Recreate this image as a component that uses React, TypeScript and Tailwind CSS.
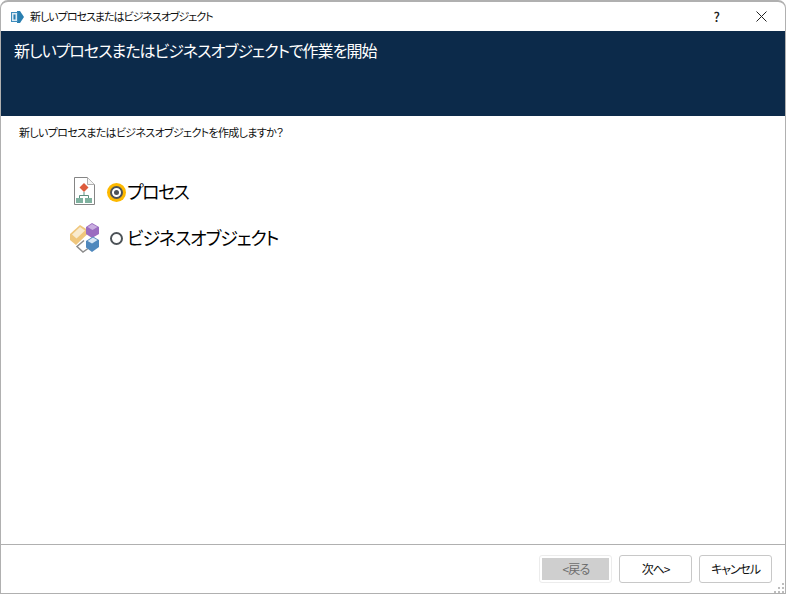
import { useState } from 'react'

const font = "font-['Noto_Sans_CJK_JP','Liberation_Sans',sans-serif] [font-feature-settings:'palt']"

function AppIcon() {
  return (
    <svg width="16" height="16" viewBox="0 0 16 16">
      <path d="M8 2h3l4 6-4 6H8z" fill="#2a7fb0" />
      <rect x="2.5" y="3.5" width="6" height="9" fill="#dbe9f3" stroke="#3f8dbd" />
      <rect x="4.5" y="5.5" width="2" height="5" fill="#2a7fb0" />
    </svg>
  )
}

function ProcessIcon() {
  return (
    <svg width="24" height="30" viewBox="0 0 24 30">
      <path d="M1.5 1.5h13l7 7v20h-20z" fill="#fff" stroke="#858585" />
      <path d="M14.5 1.5v7h7" fill="#f4f4f4" stroke="#b0b0b0" />
      <path d="M11 7l4.500 4.500L11 16l-4.500-4.500z" fill="#dd5b3c" />
      <path d="M11 16v3.500M6.500 22v-2.500h9V22" fill="none" stroke="#5d8f80" />
      <rect x="3" y="22" width="7" height="5" fill="#7fb19f" />
      <rect x="12" y="22" width="7" height="5" fill="#7fb19f" />
    </svg>
  )
}

function ObjectIcon() {
  return (
    <svg width="31" height="31" viewBox="0 0 31 31">
      <path d="M1 12l10-9 7 4.500v5L7 23 1 18z" fill="#efc67c" />
      <path d="M3 12.500L11 5l5 3.500L7.500 16.500z" fill="#f9ebcf" />
      <path d="M15 18.500L8 24.500l6 5.500 5-3.500" fill="none" stroke="#8c8c8c" strokeWidth="1.500" />
      <path d="M17 5l6-4 7 4v7l-7 4-6-4z" fill="#9a6cc0" />
      <path d="M18.500 5L23 2l5.500 3-5 3z" fill="#c9aee0" />
      <path d="M17 19l7-4.500 6 3.500v7l-7 5-6-4.500z" fill="#4f88bd" />
      <path d="M18.500 19l5.500-3.500 4.500 2.500-5.500 3.500z" fill="#d6e6f4" />
    </svg>
  )
}

function Radio({ checked }: { checked: boolean }) {
  if (checked) {
    return (
      <span className="mt-[2px] flex h-[19px] w-[19px] items-center justify-center rounded-full bg-[#fdb900]">
        <span className="flex h-[13px] w-[13px] items-center justify-center rounded-full border-2 border-[#4d5358] bg-white">
          <span className="h-[5px] w-[5px] rounded-full bg-[#4d5358]" />
        </span>
      </span>
    )
  }
  return (
    <span className="mt-[2px] flex h-[19px] w-[19px] items-center justify-center">
      <span className="h-[13px] w-[13px] rounded-full border-2 border-[#4d5358] bg-white" />
    </span>
  )
}

function FooterButton({ label, disabled }: { label: string; disabled?: boolean }) {
  if (disabled) {
    return (
      <button className="h-[28px] w-[73px] rounded-[3px] border border-[#ececec] bg-white p-[2px]">
        <span className="flex h-full w-full items-center justify-center bg-[#cfcfcf] pl-px text-[12px] tracking-[-0.8px] text-[#6d6d6d]">{label}</span>
      </button>
    )
  }
  return (
    <button className="h-[28px] w-[73px] rounded-[3px] border border-[#c8c8c8] bg-white text-[12px] tracking-[-1.1px] text-[#111]">
      {label}
    </button>
  )
}

export default function App() {
  const [choice, setChoice] = useState('process')

  return (
    <div className={`relative flex h-[594px] w-[786px] flex-col overflow-hidden rounded-t-[8px] border border-t-2 border-[#b0b0b0] bg-white ${font}`}>
      {/* title bar */}
      <div className="flex h-[29px] shrink-0 items-center pl-[8px]">
        <AppIcon />
        <span className="ml-[5px] text-[11px] tracking-[-1px] text-[#111]">新しいプロセスまたはビジネスオブジェクト</span>
        <span className="ml-auto mr-[36px] text-[13px] font-medium text-[#222]">?</span>
        <svg className="mr-[18px]" width="11" height="11" viewBox="0 0 11 11">
          <path d="M.5.5l10 10M10.500.5l-10 10" stroke="#222" />
        </svg>
      </div>

      {/* banner */}
      <div className="h-[85px] shrink-0 bg-[#0c2a4a] pl-[13px] pt-[7px] text-[16px] leading-[24px] tracking-[-1px] text-white">
        新しいプロセスまたはビジネスオブジェクトで作業を開始
      </div>

      {/* body */}
      <div className="flex-1 pl-[17px] pt-[7px]">
        <p className="pl-px text-[11px] leading-[18px] tracking-[-0.66px] text-[#111]">新しいプロセスまたはビジネスオブジェクトを作成しますか？</p>
        <div className="ml-[50px] mt-[34px] flex flex-col gap-[14px]">
          <label className="flex h-[32px] items-center" onClick={() => setChoice('process')}>
            <span className="flex w-[39px] justify-center pr-[6px]"><ProcessIcon /></span>
            <Radio checked={choice === 'process'} />
            <span className="ml-px text-[18px] tracking-[-1.5px] text-black">プロセス</span>
          </label>
          <label className="flex h-[32px] items-center" onClick={() => setChoice('object')}>
            <span className="flex w-[39px] justify-center pr-[6px]"><ObjectIcon /></span>
            <Radio checked={choice === 'object'} />
            <span className="ml-px text-[18px] tracking-[-1.1px] text-black">ビジネスオブジェクト</span>
          </label>
        </div>
      </div>

      {/* footer */}
      <div className="flex h-[49px] shrink-0 items-start justify-end gap-[7px] border-t border-[#b0b0b0] pr-[13px] pt-[10px]">
        <FooterButton label="<戻る" disabled />
        <FooterButton label="次へ>" />
        <FooterButton label="キャンセル" />
      </div>

      {/* resize grip */}
      <svg className="absolute bottom-0 right-0" width="11" height="11" viewBox="0 0 11 11" fill="#bdbdbd">
        <rect x="8" y="1" width="2" height="2" />
        <rect x="4" y="5" width="2" height="2" />
        <rect x="8" y="5" width="2" height="2" />
        <rect x="0" y="9" width="2" height="2" />
        <rect x="4" y="9" width="2" height="2" />
        <rect x="8" y="9" width="2" height="2" />
      </svg>
    </div>
  )
}
